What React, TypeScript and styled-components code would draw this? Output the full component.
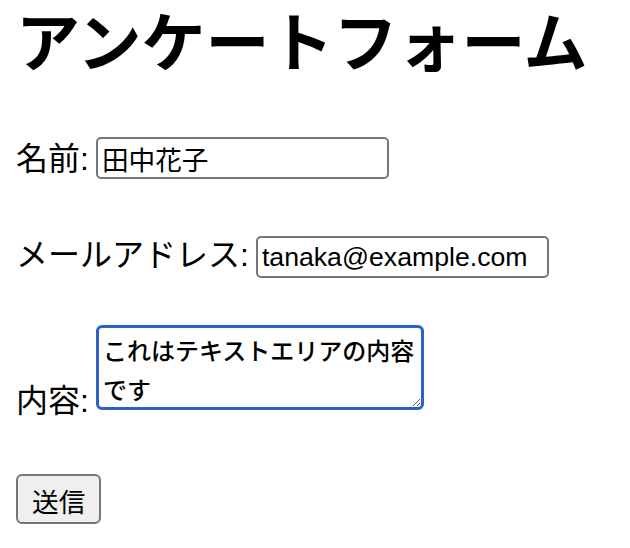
import React from "react";
import styled, { createGlobalStyle } from "styled-components";

const GlobalStyle = createGlobalStyle`
    html, body {
        margin: 0;
        padding: 0;
        background: #ffffff;
    }
    body {
        font-family: "Liberation Sans", "Noto Sans CJK JP", sans-serif;
        color: #000000;
    }
`;

const Page = styled.div`
    padding: 0 16px;
`;

const Title = styled.h1`
    margin: -8px 0 0 0;
    font-family: "Noto Sans CJK JP", sans-serif;
    font-size: 64px;
    font-weight: 700;
    line-height: 92px;
`;

const Form = styled.form`
    display: flex;
    flex-direction: column;
    align-items: flex-start;
`;

const Row = styled.div<{ $top: number; $end?: boolean }>`
    display: flex;
    align-items: ${(p) => (p.$end ? "flex-end" : "baseline")};
    gap: 7px;
    margin-top: ${(p) => p.$top}px;
`;

const Label = styled.label<{ $drop?: number }>`
    font-size: 32px;
    line-height: 32px;
    margin-bottom: ${(p) => (p.$drop ? -p.$drop : 0)}px;
`;

const TextInput = styled.input`
    box-sizing: border-box;
    width: 293px;
    height: 42px;
    padding: 2px 4px;
    border: 2px solid #767676;
    border-radius: 5px;
    font-family: "Liberation Sans", "Noto Sans CJK JP", sans-serif;
    font-size: 26.67px;
    color: #000000;
    background: #ffffff;
    outline: none;
`;

const TextArea = styled.textarea`
    box-sizing: border-box;
    width: 328px;
    height: 85px;
    padding: 2px 4px 4px 4px;
    border: 3px solid #2d62c8;
    border-radius: 6px;
    font-family: "Noto Sans CJK JP", sans-serif;
    font-size: 24px;
    font-weight: 500;
    line-height: 39px;
    color: #000000;
    background: #ffffff;
    overflow: hidden;
    outline: none;
    resize: both;
`;

const SubmitButton = styled.button`
    box-sizing: border-box;
    height: 50px;
    padding: 5px 14px 0 14px;
    border: 2px solid #767676;
    border-radius: 6px;
    background: #efefef;
    font-family: "Noto Sans CJK JP", sans-serif;
    font-size: 26.67px;
    line-height: 1;
    color: #000000;
    margin-top: 64px;
`;

export default function App() {
    return (
        <Page>
            <GlobalStyle />
            <Title>アンケートフォーム</Title>
            <Form onSubmit={(e) => e.preventDefault()}>
                <Row $top={53}>
                    <Label htmlFor="name">名前:</Label>
                    <TextInput id="name" type="text" defaultValue="田中花子" />
                </Row>
                <Row $top={57}>
                    <Label htmlFor="email">メールアドレス:</Label>
                    <TextInput id="email" type="email" defaultValue="tanaka@example.com" />
                </Row>
                <Row $top={47} $end>
                    <Label htmlFor="content" $drop={7}>内容:</Label>
                    <TextArea id="content" defaultValue="これはテキストエリアの内容です" />
                </Row>
                <SubmitButton type="submit">送信</SubmitButton>
            </Form>
        </Page>
    );
}
